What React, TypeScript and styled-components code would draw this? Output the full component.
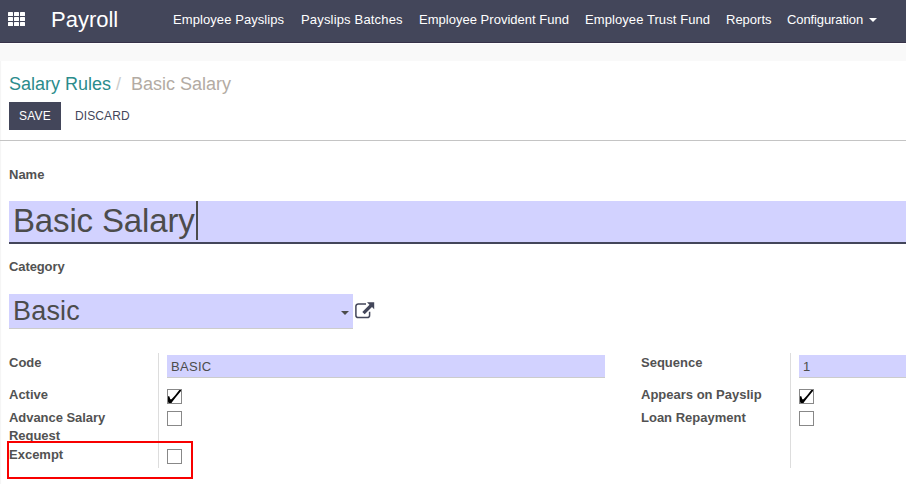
import React from "react";
import styled, { createGlobalStyle } from "styled-components";

const GlobalStyle = createGlobalStyle`
  * { box-sizing: border-box; }
  body {
    margin: 0;
    background: #fff;
    color: #4c4c4c;
    font: 13px/18px "Liberation Sans", Arial, sans-serif;
    overflow: hidden;
  }
`;

const Page = styled.div`
  position: relative;
  width: 906px;
  height: 484px;
  overflow: hidden;
  box-shadow: inset 2px 0 1px -1px #f4f4f4;
  padding-left: 9px;
`;

const TopBar = styled.header`
  display: flex;
  height: 43px;
  margin-left: -9px;
  background: #43465a;
  border-bottom: 1px solid #373249;
  color: #fff;
`;

const AppsIcon = styled.svg`
  width: 17px;
  height: 15px;
  margin: 12px 0 0 8px;
`;

const Brand = styled.div`
  width: 122px;
  margin: 7px 0 0 26px;
  font-size: 22px;
  line-height: 26px;
`;

const Menu = styled.nav`
  display: flex;
  padding-top: 11px;
`;

const MenuItem = styled.a<{ $width: number; $track?: number }>`
  display: flex;
  align-items: center;
  height: 18px;
  width: ${(p) => p.$width}px;
  white-space: nowrap;
  letter-spacing: ${(p) => p.$track ?? 0}px;
`;

const Caret = styled.span`
  border: 4px solid transparent;
  border-top-color: currentColor;
  border-bottom: 0;
`;

const Strip = styled.div`
  height: 18px;
  margin-left: -9px;
  border-top: 1px solid #fff;
  background: #f9f9f9;
`;

const ControlPanel = styled.section`
  height: 80px;
  margin-left: -9px;
  padding: 12px 0 0 9px;
  border-bottom: 1px solid #c4c4c4;
`;

const Breadcrumb = styled.div`
  display: flex;
  height: 22px;
  font-size: 18px;
  line-height: 22px;
  color: #b3aba3;
`;

const Crumb = styled.a`
  width: 107px;
  color: #2b8c8c;
`;

const Slash = styled.span`
  width: 15px;
  color: #ccc;
`;

const Actions = styled.div`
  display: flex;
  margin-top: 7px;
`;

const Button = styled.button<{ $primary?: boolean }>`
  height: 28px;
  width: ${(p) => (p.$primary ? 52 : 76)}px;
  padding: 0 0 0 10px;
  margin-right: 4px;
  border: 0;
  text-align: left;
  background: ${(p) => (p.$primary ? "#43465a" : "transparent")};
  color: ${(p) => (p.$primary ? "#fff" : "#43465a")};
  font: 12px/28px "Liberation Sans", Arial, sans-serif;
  letter-spacing: ${(p) => (p.$primary ? 0.25 : 0.1)}px;
`;

const Label = styled.label<{ $track?: number }>`
  display: block;
  font-weight: bold;
  color: #525252;
  letter-spacing: ${(p) => p.$track ?? 0}px;
`;

const NameBlock = styled.div`
  padding-top: 25px;
`;

const NameField = styled.div`
  display: flex;
  height: 43px;
  margin-top: 17px;
  padding-left: 4px;
  background: #d2d2ff;
  border-bottom: 2px solid #43465a;
  font-size: 33px;
  line-height: 40px;
`;

const TextCursor = styled.span`
  width: 2px;
  height: 39px;
  background: #4c4c4c;
`;

const NameText = styled.span`
  width: 183px;
  white-space: nowrap;
  letter-spacing: -0.15px;
`;

const CategoryBlock = styled.div`
  padding-top: 14px;
`;

const CategoryRow = styled.div`
  display: flex;
  margin-top: 18px;
  height: 35px;
`;

const Select = styled.div`
  display: flex;
  justify-content: space-between;
  width: 344px;
  height: 35px;
  padding: 0 4px;
  background: #d2d2ff;
  border-bottom: 1px solid #ccc;
  font-size: 27px;
  line-height: 34px;
  letter-spacing: 0.2px;

  ${Caret} {
    margin-top: 17px;
  }
`;

const ExternalIcon = styled.svg`
  width: 20px;
  height: 18px;
  margin: 8px 0 0 2px;
`;

const Groups = styled.div`
  display: flex;
  gap: 36px;
  width: 1228px;
  margin-top: 24px;
`;

const Group = styled.div`
  display: grid;
  grid-template-columns: 150px 446px;
  flex: none;
  height: 115px;
`;

const Labels = styled.div`
  display: flex;
  flex-direction: column;
  border-right: 1px solid #ddd;
`;

const LabelCell = styled.div<{ $height: number }>`
  height: ${(p) => p.$height}px;
  padding-top: 1px;
`;

const Values = styled.div`
  padding: 2px 0 0 8px;
`;

const Input = styled.div`
  height: 23px;
  padding-left: 4px;
  line-height: 23px;
  background: #d2d2ff;
  border-bottom: 1px solid #ccc;
  letter-spacing: 0.3px;
`;

const Box = styled.svg<{ $top: number }>`
  display: block;
  width: 15px;
  height: 15px;
  margin-top: ${(p) => p.$top}px;
`;

const Highlight = styled.div`
  position: absolute;
  left: 7px;
  top: 441px;
  width: 186px;
  height: 38px;
  border: 2px solid #f80000;
`;

function Checkbox({ checked, top }: { checked?: boolean; top: number }) {
  return (
    <Box $top={top} viewBox="0 0 15 15">
      <rect x=".5" y=".5" width="14" height="14" fill="#fff" stroke="#888" />
      {checked && (
        <path d="M1 7.300H2.300L3.300 10.200H4.500L8 6.500 12.300 1H14V2L9 8 5.500 12.500 4.500 14H1.500L1 12.500Z" fill="#000" />
      )}
    </Box>
  );
}

const menu = [
  { text: "Employee Payslips", width: 128, track: 0.08 },
  { text: "Payslips Batches", width: 118, track: 0.17 },
  { text: "Employee Provident Fund", width: 166, track: 0.02 },
  { text: "Employee Trust Fund", width: 141, track: 0.08 },
  { text: "Reports", width: 61, track: 0 },
];

export default function App() {
  return (
    <>
      <GlobalStyle />
      <Page>
        <TopBar>
          <AppsIcon viewBox="0 0 17 15" fill="#fff">
            {[0, 5, 10].map((y) =>
              [0, 6, 12].map((x) => (
                <rect key={`${x}-${y}`} x={x} y={y} width="5" height="4" rx=".5" />
              ))
            )}
          </AppsIcon>
          <Brand>Payroll</Brand>
          <Menu>
            {menu.map((m) => (
              <MenuItem key={m.text} $width={m.width} $track={m.track}>
                {m.text}
              </MenuItem>
            ))}
            <MenuItem $width={82} $track={-0.1}>Configuration</MenuItem>
            <MenuItem $width={8}><Caret /></MenuItem>
          </Menu>
        </TopBar>
        <Strip />
        <ControlPanel>
          <Breadcrumb>
            <Crumb>Salary Rules</Crumb>
            <Slash>/</Slash>
            <span>Basic Salary</span>
          </Breadcrumb>
          <Actions>
            <Button $primary>SAVE</Button>
            <Button>DISCARD</Button>
          </Actions>
        </ControlPanel>

        <NameBlock>
          <Label>Name</Label>
          <NameField>
            <NameText>Basic Salary</NameText>
            <TextCursor />
          </NameField>
        </NameBlock>

        <CategoryBlock>
          <Label $track={-0.1}>Category</Label>
          <CategoryRow>
            <Select>
              Basic
              <Caret />
            </Select>
            <ExternalIcon viewBox="0 0 20 18">
              <path
                d="M11 1.900H3.300A2.400 2.400 0 0 0 .9 4.300V13.200A2.400 2.400 0 0 0 3.300 15.600H12.200A2.400 2.400 0 0 0 14.600 13.200V9.800"
                fill="none"
                stroke="#43465a"
                strokeWidth="1.5"
              />
              <path d="M12 .2H19.200V7.200L17 5.100 9.700 12.200 7.300 9.900 14.500 2.700Z" fill="#43465a" />
            </ExternalIcon>
          </CategoryRow>
        </CategoryBlock>

        <Groups>
          <Group>
            <Labels>
              <LabelCell $height={32}><Label>Code</Label></LabelCell>
              <LabelCell $height={23}><Label>Active</Label></LabelCell>
              <LabelCell $height={37}><Label $track={-0.05}>Advance Salary<br />Request</Label></LabelCell>
              <LabelCell $height={23}><Label>Excempt</Label></LabelCell>
            </Labels>
            <Values>
              <Input>BASIC</Input>
              <Checkbox checked top={11} />
              <Checkbox top={7} />
              <Checkbox top={23} />
            </Values>
          </Group>
          <Group>
            <Labels>
              <LabelCell $height={32}><Label>Sequence</Label></LabelCell>
              <LabelCell $height={23}><Label>Appears on Payslip</Label></LabelCell>
              <LabelCell $height={37}><Label>Loan Repayment</Label></LabelCell>
            </Labels>
            <Values>
              <Input>1</Input>
              <Checkbox checked top={11} />
              <Checkbox top={7} />
            </Values>
          </Group>
        </Groups>
        <Highlight />
      </Page>
    </>
  );
}
